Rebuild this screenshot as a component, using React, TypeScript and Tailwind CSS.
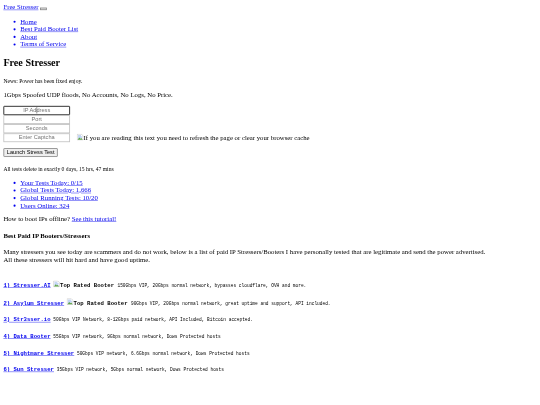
function BrokenImage() {
    return (
        <svg className="inline-block align-[-1px]" width="16" height="16" viewBox="0 0 16 16">
            <path d="M1 1h10l4 4v10H1z" fill="#fff" stroke="#a8a8a8" />
            <path d="M3 3h7v3h3v3L9 11l-6 2z" fill="#c4d6f5" />
            <path d="M2 14l4-5 3 3 2-2 3 4z" fill="#5fa548" />
        </svg>
    )
}

function Field({ label, focused }: { label: string; focused?: boolean }) {
    return (
        <div className={`relative w-[158px] h-[21.5px] flex items-center justify-center text-[#757575] text-[13.33px] font-['Liberation_Sans'] ${focused ? 'border-2 border-[#111] rounded-[2px]' : 'border-2 border-[#c2c2c2]'}`}>
            {label}
            {focused && <span className="absolute left-[77px] top-[1px] h-[15px] w-[1px] bg-black" />}
        </div>
    )
}

const stats = ['Your Tests Today: 0/15', 'Global Tests Today: 1,666', 'Global Running Tests: 10/20', 'Users Online: 324']

const boosters = [
    { name: '1) Stresser.AI', img: true, text: '150Gbps VIP, 20Gbps normal network, bypasses cloudflare, OVH and more.' },
    { name: '2) Asylum Stresser', img: true, text: '90Gbps VIP, 20Gbps normal network, great uptime and support, API included.' },
    { name: '3) Str3sser.io', img: false, text: '50Gbps VIP Network, 8-12Gbps paid network, API Included, Bitcoin accepted.' },
    { name: '4) Data Booter', img: false, text: '55Gbps VIP network, 9Gbps normal network, Dows Protected hosts' },
    { name: '5) Nightmare Stresser', img: false, text: '50Gbps VIP network, 6.6Gbps normal network, Dows Protected hosts' },
    { name: '6) Sun Stresser', img: false, text: '35Gbps VIP network, 5Gbps normal network, Dows Protected hosts' },
]

// the page is laid out at 1280 wide and shrunk to the window
export default function App() {
    return (
        <div className="w-[540px] h-[405px] overflow-hidden bg-white">
            <div className="w-[1280px] origin-top-left scale-[0.421875] blur-[0.7px] font-['Liberation_Serif'] text-black text-[16px] leading-[18px] p-[8px]">
                <div className="h-[18px]">
                    <a className="text-[#0000ee] underline">Free Stresser</a>{' '}
                    <button className="inline-block w-[16px] h-[6px] border-2 border-[#8a8a8a] bg-[#efefef]" />
                </div>

                <ul className="list-disc pl-[40px] mt-[16px] text-[#0000ee]">
                    <li><a className="underline">Home</a></li>
                    <li><a className="underline">Best Paid Booter List</a></li>
                    <li><a className="underline">About</a></li>
                    <li><a className="underline">Terms of Service</a></li>
                </ul>

                <h2 className="font-bold text-[24px] leading-[27px] mt-[22px]">Free Stresser</h2>
                <p className="text-[13.33px] leading-[15px] mt-[22px]">News: Power has been fixed enjoy.</p>
                <p className="mt-[16px]">1Gbps Spoofed UDP floods, No Accounts, No Logs, No Price.</p>

                <div className="flex items-end mt-[17px]">
                    <div className="flex flex-col">
                        <Field label="IP Address" focused />
                        <Field label="Port" />
                        <Field label="Seconds" />
                        <Field label="Enter Captcha" />
                    </div>
                    <div className="ml-[16px] mb-[1px]">
                        <BrokenImage />
                        If you are reading this text you need to refresh the page or clear your browser cache
                    </div>
                </div>

                <button className="block mt-[14px] h-[21px] px-[6px] text-[13.33px] leading-[15px] font-['Liberation_Sans'] bg-[#efefef] border-2 border-[#8a8a8a] rounded-[2px]">
                    Launch Stress Test
                </button>

                <p className="text-[13.33px] leading-[15px] mt-[21px]">All tests delete in exactly 0 days, 15 hrs, 47 mins</p>

                <ul className="list-disc pl-[40px] mt-[16px] text-[#0000ee]">
                    {stats.map((s) => (
                        <li key={s}><a className="underline">{s}</a></li>
                    ))}
                </ul>

                <p className="mt-[14px]">How to boot IPs offline? <a className="text-[#0000ee] underline">See this tutorial!</a></p>

                <h4 className="font-bold mt-[22px]">Best Paid IP Booters/Stressers</h4>

                <p className="mt-[21px] w-[1180px]">
                    Many stressers you see today are scammers and do not work, below is a list of paid IP Stressers/Booters I have personally tested that are legitimate and send the power advertised.
                    <br />
                    All these stressers will hit hard and have good uptime.
                </p>

                <div className="mt-[40px] flex flex-col gap-[21.4px] font-['Liberation_Mono'] text-[10.67px] leading-[17px]">
                    {boosters.map((b) => (
                        <div key={b.name} className="whitespace-pre">
                            <a className="font-bold text-[#0000ee] underline text-[13.33px]">{b.name}</a>
                            {' '}
                            {b.img && (
                                <span className="font-bold text-[13.33px]">
                                    <BrokenImage />Top Rated Booter{' '}
                                </span>
                            )}
                            {b.text}
                        </div>
                    ))}
                </div>
            </div>
        </div>
    )
}
